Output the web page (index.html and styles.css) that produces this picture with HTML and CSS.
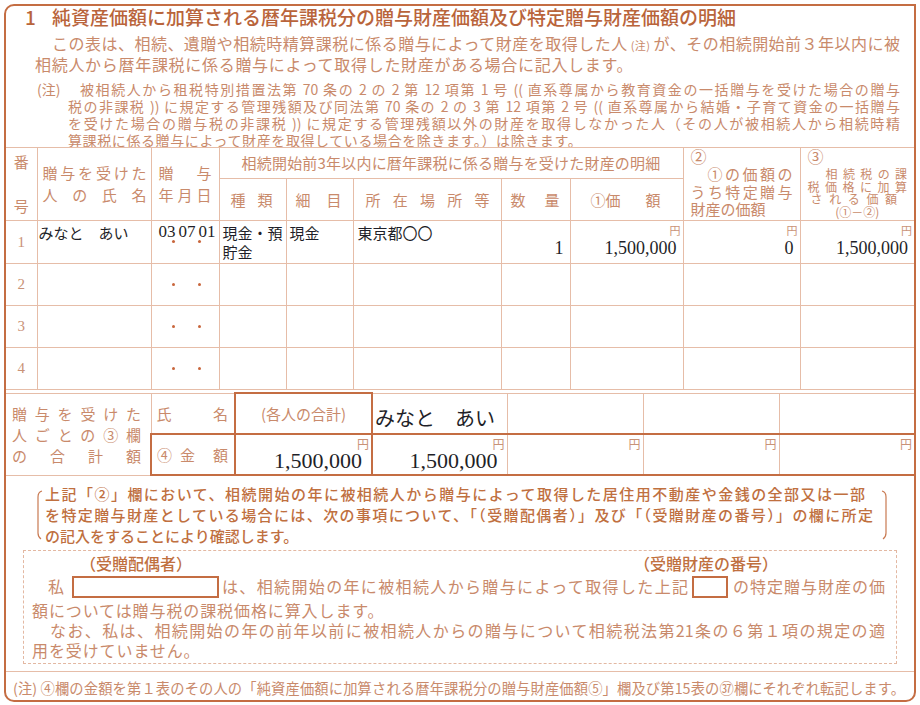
FILE: index.html
```html
<!DOCTYPE html>
<html lang="ja">
<head>
<meta charset="utf-8">
<title>暦年課税分の贈与財産価額の明細</title>
<link rel="stylesheet" href="styles.css">
</head>
<body>
<div class="sheet">
  <div class="intro">
    <h1 class="title"><span class="title-num">1</span><span>純資産価額に加算される暦年課税分の贈与財産価額及び特定贈与財産価額の明細</span></h1>
    <p class="lead lead-first fill">この表は、相続、遺贈や相続時精算課税に係る贈与によって財産を取得した人<span class="lead-note">(注)</span>が、その相続開始前３年以内に被</p>
    <p class="lead lead-second">相続人から暦年課税に係る贈与によって取得した財産がある場合に記入します。</p>
    <div class="note">
      <div class="note-first"><span class="note-tag">(注)</span><span class="note-text fill">被相続人から租税特別措置法第 70 条の 2 の 2 第 12 項第 1 号 (( 直系尊属から教育資金の一括贈与を受けた場合の贈与</span></div>
      <p class="note-line fill">税の非課税 )) に規定する管理残額及び同法第 70 条の 2 の 3 第 12 項第 2 号 (( 直系尊属から結婚・子育て資金の一括贈与</p>
      <p class="note-line fill">を受けた場合の贈与税の非課税 )) に規定する管理残額以外の財産を取得しなかった人（その人が被相続人から相続時精</p>
      <p class="note-line note-last">算課税に係る贈与によって財産を取得している場合を除きます。）は除きます。</p>
    </div>
  </div>

  <table class="detail">
    <colgroup>
      <col style="width:31px"><col style="width:114px"><col style="width:68px"><col style="width:67px"><col style="width:67px"><col style="width:148px"><col style="width:69px"><col style="width:113px"><col style="width:117px"><col style="width:114px">
    </colgroup>
    <thead>
      <tr class="hr1">
        <th rowspan="2" class="edge-l h-no"><div class="ends"><span>番</span><span>号</span></div></th>
        <th rowspan="2" class="h-name"><div class="fill">贈与を受けた</div><div class="fill">人の氏名</div></th>
        <th rowspan="2" class="h-date"><div class="fill">贈与</div><div class="fill">年月日</div></th>
        <th colspan="5" class="h-group">相続開始前3年以内に暦年課税に係る贈与を受けた財産の明細</th>
        <th rowspan="2" class="h-two">
          <div class="circ">②</div>
          <div class="fill two-1">①の価額の</div>
          <div class="fill">うち特定贈与</div>
          <div>財産の価額</div>
        </th>
        <th rowspan="2" class="edge-r h-three">
          <div class="circ">③</div>
          <div class="three-lines">
            <div class="fill three-1">相続税の課</div>
            <div class="fill">税価格に加算</div>
            <div class="fill three-3">される価額</div>
            <div class="three-4">(①－②)</div>
          </div>
        </th>
      </tr>
      <tr class="hr2">
        <th class="h-sub sub-kind"><div class="fill">種類</div></th>
        <th class="h-sub sub-item"><div class="fill">細目</div></th>
        <th class="h-sub sub-place"><div class="fill">所在場所等</div></th>
        <th class="h-sub sub-qty"><div class="fill">数量</div></th>
        <th class="h-sub sub-price"><div class="split"><span>①価</span><span>額</span></div></th>
      </tr>
    </thead>
    <tbody>
      <tr class="row r-first">
        <td class="edge-l no">1</td>
        <td class="txt name">みなと　あい</td>
        <td class="date"><div class="date-stack"><span class="date-val"><span>03</span><span>07</span><span>01</span></span><span class="dots"><i></i><i></i></span></div></td>
        <td class="txt">現金・預<br>貯金</td>
        <td class="txt">現金</td>
        <td class="txt place">東京都〇〇</td>
        <td class="amt"><div class="amt-stack"><span class="yen"></span><span class="val">1</span></div></td>
        <td class="amt"><div class="amt-stack"><span class="yen">円</span><span class="val">1,500,000</span></div></td>
        <td class="amt"><div class="amt-stack"><span class="yen">円</span><span class="val">0</span></div></td>
        <td class="edge-r amt"><div class="amt-stack"><span class="yen">円</span><span class="val">1,500,000</span></div></td>
      </tr>
      <tr class="row r-2">
        <td class="edge-l no">2</td><td></td>
        <td class="date"><div class="date-stack"><span class="dots"><i></i><i></i></span></div></td>
        <td></td><td></td><td></td><td></td><td></td><td></td><td class="edge-r"></td>
      </tr>
      <tr class="row r-3">
        <td class="edge-l no">3</td><td></td>
        <td class="date"><div class="date-stack"><span class="dots"><i></i><i></i></span></div></td>
        <td></td><td></td><td></td><td></td><td></td><td></td><td class="edge-r"></td>
      </tr>
      <tr class="row r-4">
        <td class="edge-l no">4</td><td></td>
        <td class="date"><div class="date-stack"><span class="dots"><i></i><i></i></span></div></td>
        <td></td><td></td><td></td><td></td><td></td><td></td><td class="edge-r"></td>
      </tr>
    </tbody>
  </table>

  <table class="totals">
    <colgroup>
      <col style="width:145px"><col style="width:84px"><col style="width:137px"><col style="width:135px"><col style="width:136px"><col style="width:136px"><col style="width:135px">
    </colgroup>
    <tr class="tr1">
      <th rowspan="2" class="edge-l t-label"><div class="fill">贈与を受けた</div><div class="fill">人ごとの③欄</div><div class="fill">の合計額</div></th>
      <th class="t-key"><div class="fill">氏名</div></th>
      <td class="t-sum t-sum-head">(各人の合計)</td>
      <td class="t-name">みなと　あい</td>
      <td></td><td></td><td class="edge-r"></td>
    </tr>
    <tr class="tr2">
      <th class="t-key t-key-amt"><div class="split"><span><span class="k4">④</span>金</span><span>額</span></div></th>
      <td class="t-sum t-amt"><div class="amt-stack big"><span class="yen">円</span><span class="val">1,500,000</span></div></td>
      <td class="t-amt"><div class="amt-stack big"><span class="yen">円</span><span class="val">1,500,000</span></div></td>
      <td class="t-amt"><div class="amt-stack big"><span class="yen">円</span><span class="val"></span></div></td>
      <td class="t-amt"><div class="amt-stack big"><span class="yen">円</span><span class="val"></span></div></td>
      <td class="t-amt edge-r"><div class="amt-stack big"><span class="yen">円</span><span class="val"></span></div></td>
    </tr>
  </table>

  <div class="confirm">
    <div class="confirm-head">
      <svg class="brace" width="8" height="50" viewBox="0 0 8 50"><path d="M7 1 Q3 2 3 7 L3 43 Q3 47 6 49" fill="none" stroke="#c97a52" stroke-width="1.2"/></svg>
      <div class="confirm-text">
        <p class="fill c-line1">上記「②」欄において、相続開始の年に被相続人から贈与によって取得した居住用不動産や金銭の全部又は一部</p>
        <p class="fill">を特定贈与財産としている場合には、次の事項について、「（受贈配偶者）」及び「（受贈財産の番号）」の欄に所定</p>
        <p>の記入をすることにより確認します。</p>
      </div>
      <svg class="brace brace-r" width="8" height="50" viewBox="0 0 8 50"><path d="M1 1 Q5 2 5 7 L5 43 Q5 47 2 49" fill="none" stroke="#c97a52" stroke-width="1.2"/></svg>
    </div>
    <div class="pledge">
      <div class="pledge-labels"><span class="lab-l">（受贈配偶者）</span><span class="lab-r">（受贈財産の番号）</span></div>
      <div class="pledge-row">
        <span class="watashi">私</span>
        <span class="inbox inbox-wide"></span>
        <span class="fill seg1">は、相続開始の年に被相続人から贈与によって取得した上記</span>
        <span class="inbox inbox-small"></span>
        <span class="fill seg2">の特定贈与財産の価</span>
      </div>
      <p class="pl pl-start">額については贈与税の課税価格に算入します。</p>
      <p class="pl pl-indent fill">なお、私は、相続開始の年の前年以前に被相続人からの贈与について相続税法第21条の６第１項の規定の適</p>
      <p class="pl pl-start">用を受けていません。</p>
    </div>
  </div>

  <p class="foot fill">(注) ④欄の金額を第１表のその人の「純資産価額に加算される暦年課税分の贈与財産価額⑤」欄及び第15表の㊲欄にそれぞれ転記します。</p>
</div>
</body>
</html>
```

FILE: styles.css
```css
* { box-sizing: border-box; }
html, body { margin: 0; padding: 0; background: #ffffff; }
body {
  font-family: "Noto Sans CJK JP", sans-serif;
  color: #c98a6b;
}
p { margin: 0; }

.fill { text-align: justify; text-align-last: justify; }
.split { display: flex; justify-content: space-between; }

.sheet {
  margin: 4px 0 0 4px;
  width: 912px;
  height: 698px;
  border: 2px solid #c46d43;
  border-radius: 10px 0 10px 10px;
  display: flex;
  flex-direction: column;
  overflow: hidden;
}

/* intro */
.intro { height: 141px; flex: none; }
.title {
  margin: 0;
  height: 22px;
  line-height: 22px;
  font-size: 19px;
  font-weight: 500;
  color: #b9643b;
  padding-left: 19px;
  display: flex;
  white-space: nowrap;
}
.title-num { width: 27px; }
.lead { font-size: 16px; line-height: 19px; white-space: nowrap; }
.lead-first { margin-top: 6px; padding: 0 14px 0 46px; }
.lead-second { padding-left: 29px; letter-spacing: 0.7px; }
.lead-note { font-size: 11px; margin: 0 3px; }
.note { margin-top: 7px; font-size: 14px; line-height: 17px; white-space: nowrap; }
.note-first { display: flex; padding: 0 14px 0 31px; }
.note-tag { width: 43px; flex: none; }
.note-text { flex: 1; }
.note-line { padding: 0 14px 0 62px; }
.note-last { letter-spacing: 0.6px; }

/* detail table */
.detail, .totals {
  width: 908px;
  border-collapse: collapse;
  table-layout: fixed;
  flex: none;
}
.detail th, .detail td, .totals th, .totals td {
  border: 1px solid #e6bda8;
  padding: 0;
  font-weight: normal;
}
.edge-l { border-left: none !important; }
.edge-r { border-right: none !important; }

.detail th { font-size: 15px; line-height: 22px; color: #c98a6b; vertical-align: middle; }
.hr1 { height: 31px; }
.hr2 { height: 42px; }
.h-no { padding: 2px 0 !important; }
.ends { display: flex; flex-direction: column; justify-content: space-between; align-items: center; height: 66px; }
.h-name { padding: 0 4px 0 5px !important; line-height: 22px; }
.h-date { padding: 0 7px !important; }
.h-group { font-size: 15.5px; letter-spacing: 0.2px; text-align: center; }
.h-sub { font-size: 15px; }
.sub-kind { padding: 0 13px 0 11px !important; }
.sub-item { padding: 0 11px 0 9px !important; }
.sub-place { padding: 0 11px 0 12px !important; }
.sub-qty { padding: 0 10px 0 9px !important; }
.sub-price { padding: 0 22px 0 20px !important; }

.h-two {
  vertical-align: top !important;
  text-align: left;
  padding: 0 7px 0 7px !important;
  font-size: 16px;
  line-height: 17.5px !important;
}
.two-1 { padding-left: 17px; }
.circ { text-align: left; font-size: 16px; line-height: 17px; }
.h-three {
  vertical-align: top !important;
  text-align: left;
  padding: 0 7px 0 7px !important;
}
.three-lines { margin-top: 3px; font-size: 12px; line-height: 12.5px; }
.three-1 { padding-left: 18px; }
.three-3 { padding: 0 10px 0 3px; }
.three-4 { text-align: center; font-size: 12px; }

.row { height: 42px; }
.r-first { height: 43px; }
.r-4 { height: 41px; }
.row td { vertical-align: top; }
.no {
  vertical-align: middle !important;
  text-align: center;
  font-family: "Liberation Serif", serif;
  font-size: 15px;
  color: #c99277;
}
.txt {
  color: #1f1f28;
  font-size: 15px;
  line-height: 19px;
  padding: 2px 0 0 3px !important;
}
.name { padding-left: 1px !important; }
.place { padding-left: 4px !important; }
.date { padding: 0 !important; }
.date-stack { display: grid; height: 41px; }
.date-stack > * { grid-area: 1 / 1; }
.date-val {
  align-self: start;
  display: flex;
  gap: 3px;
  padding: 1px 0 0 7px;
  font-family: "Liberation Serif", serif;
  font-size: 17px;
  line-height: 19px;
  color: #1f1f28;
}
.dots { align-self: center; display: flex; gap: 23px; padding-left: 20px; }
.dots i { display: block; width: 3px; height: 3px; border-radius: 50%; background: #c8663c; }

.amt { padding: 0 !important; }
.amt-stack { display: flex; flex-direction: column; align-items: flex-end; }
.yen { font-size: 11px; line-height: 14px; height: 16px; padding: 2px 2px 0 0; color: #c99277; }
.val {
  font-family: "Liberation Serif", serif;
  font-size: 18px;
  line-height: 22px;
  color: #1f1f28;
  padding-right: 6px;
}

/* totals */
.totals { margin-top: 2px; }
.tr1 { height: 41px; }
.tr2 { height: 41px; }
.t-label {
  font-size: 15px;
  line-height: 21px;
  color: #c98a6b;
  padding: 0 9px 0 6px !important;
  vertical-align: middle;
}
.t-key { font-size: 15px; color: #c98a6b; padding: 0 6px 0 5px !important; vertical-align: middle; }
.k4 { margin-right: 8px; }
.t-sum-head { font-size: 15px; color: #c98a6b; text-align: center; vertical-align: middle; }
.t-sum { border: 2px solid #c46d43 !important; }
.tr2 th, .tr2 td { border-top: 2px solid #c46d43; border-bottom: 2px solid #c46d43; }
.t-key-amt { border: 2px solid #c46d43 !important; }
.t-name {
  font-size: 20px;
  color: #1f1f28;
  vertical-align: bottom;
  padding: 0 0 2px 2px !important;
  line-height: 26px;
}
.t-amt { vertical-align: top; }
.big .yen { font-size: 12px; height: 14px; line-height: 14px; padding: 2px 2px 0 0; }
.big .val { font-size: 22px; line-height: 24px; padding-right: 9px; }

/* confirm */
.confirm {
  height: 196px;
  flex: none;
  border-bottom: 1px solid #e6bda8;
  padding-top: 7px;
}
.confirm-head { display: flex; align-items: center; padding-left: 29px; }
.brace { flex: none; }
.confirm-text {
  width: 828px;
  margin-left: 2px;
  font-size: 15px;
  line-height: 21px;
  font-weight: 500;
  color: #c0703f;
  white-space: nowrap;
}
.c-line1 { padding-right: 8px; }
.brace-r { margin-left: 8px; }
.pledge {
  margin: 4px 17px 0 17px;
  height: 114px;
  border: 1px dashed #e3b8a2;
  font-size: 16px;
  white-space: nowrap;
}
.pledge-labels {
  display: flex;
  height: 24px;
  line-height: 24px;
  font-size: 16px;
  font-weight: 500;
  color: #c0703f;
}
.lab-l { margin-left: 56px; }
.lab-r { margin-left: auto; margin-right: 118px; }
.pledge-row { display: flex; align-items: center; height: 23px; padding-left: 24px; line-height: 21px; }
.watashi { width: 16px; }
.inbox { display: block; height: 22px; border: 2px solid #c46d43; }
.inbox-wide { width: 147px; margin-left: 8px; }
.inbox-small { width: 36px; margin-left: 4px; }
.seg1 { width: 466px; margin-left: 3px; }
.seg2 { width: 152px; margin-left: 5px; }
.pl { line-height: 20px; letter-spacing: 0.9px; }
.pl-start { padding-left: 8px; }
.pl-indent { padding: 0 11px 0 26px; letter-spacing: 0; }
.pledge-row + .pl { margin-top: 2px; }

.foot {
  flex: 1;
  font-size: 14.3px;
  line-height: 31px;
  padding: 0 9px 0 7px;
  white-space: nowrap;
}
```
